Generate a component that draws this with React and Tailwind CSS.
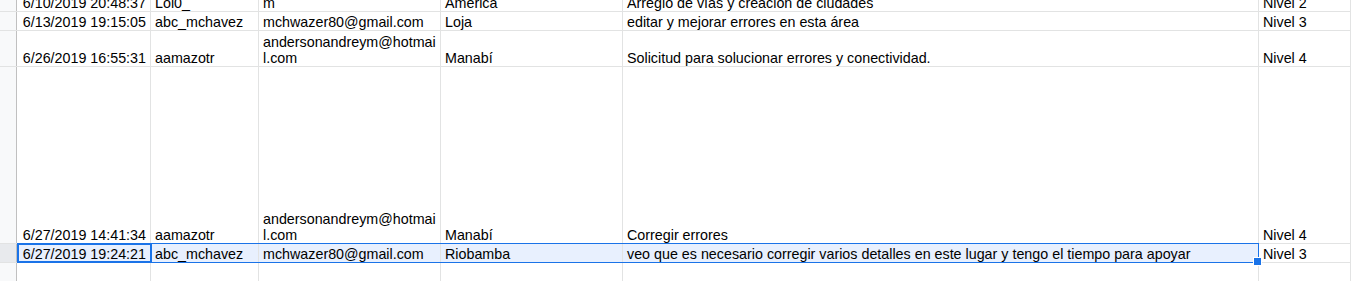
const cols = [
  { w: 'w-[134px]', align: 'justify-end text-right pr-[4px]' },
  { w: 'w-[108px]', align: 'pl-[4px]' },
  { w: 'w-[182px]', align: 'pl-[4px]' },
  { w: 'w-[182px]', align: 'pl-[4px]' },
  { w: 'w-[636px]', align: 'pl-[4px]' },
  { w: 'flex-1', align: 'pl-[4px]' },
];

const rows = [
  { h: 'h-[12px]', cells: ['6/10/2019 20:48:37', 'Lol0_', 'm', 'América', 'Arreglo de vías y creación de ciudades', 'Nivel 2'] },
  { h: 'h-[19px]', cells: ['6/13/2019 19:15:05', 'abc_mchavez', 'mchwazer80@gmail.com', 'Loja', 'editar y mejorar errores en esta área', 'Nivel 3'] },
  { h: 'h-[36px]', cells: ['6/26/2019 16:55:31', 'aamazotr', ['andersonandreym@hotmai', 'l.com'], 'Manabí', 'Solicitud para solucionar errores y conectividad.', 'Nivel 4'] },
  { h: 'h-[177px]', cells: ['6/27/2019 14:41:34', 'aamazotr', ['andersonandreym@hotmai', 'l.com'], 'Manabí', 'Corregir errores', 'Nivel 4'] },
];

const selected = ['6/27/2019 19:24:21', 'abc_mchavez', 'mchwazer80@gmail.com', 'Riobamba', 'veo que es necesario corregir varios detalles en este lugar y tengo el tiempo para apoyar', 'Nivel 3'];

const Cell = ({ col, value, fill }) => (
  <div
    className={`${col.w} shrink-0 flex items-end overflow-hidden whitespace-nowrap border-r border-[#e2e3e3] ${col.align} ${fill}`}
  >
    <div className="leading-[16px]">
      {Array.isArray(value) ? value.map((v, i) => <div key={i}>{v}</div>) : value}
    </div>
  </div>
);

export default function App() {
  return (
    <div
      className="w-[1351px] h-[281px] overflow-hidden bg-white text-[14.3px] text-black"
      style={{ fontFamily: '"Liberation Sans", Arial, sans-serif' }}
    >
      {rows.map((r, ri) => (
        <div key={ri} className={`${r.h} flex border-b border-[#e2e3e3]`}>
          <div className="w-[17px] shrink-0 bg-[#f8f9fa] border-r border-[#c0c0c0]" />
          {r.cells.map((c, i) => (
            <Cell key={i} col={cols[i]} value={c} fill="" />
          ))}
        </div>
      ))}

      <div className="relative h-[19px] flex border-b border-[#e2e3e3]">
        <div className="w-[17px] shrink-0 bg-[#e8eaed] border-r border-[#c0c0c0]" />
        {selected.map((c, i) => (
          <Cell key={i} col={cols[i]} value={c} fill={i < 5 ? 'bg-[#e8f0fe]' : ''} />
        ))}
        <div className="absolute left-[17px] top-[-1px] w-[1242px] h-[20px] border border-[#1a73e8] pointer-events-none" />
        <div className="absolute left-[17px] top-[-1px] w-[135px] h-[20px] border-2 border-[#1a73e8] pointer-events-none" />
        <div className="absolute left-[1253px] top-[13px] w-[9px] h-[9px] bg-[#1a73e8] border border-white" />
      </div>

      <div className="h-[40px] flex">
        <div className="w-[17px] shrink-0 bg-[#f8f9fa] border-r border-[#c0c0c0]" />
        {cols.map((col, i) => (
          <div key={i} className={`${col.w} shrink-0 border-r border-[#e2e3e3]`} />
        ))}
      </div>
    </div>
  );
}
